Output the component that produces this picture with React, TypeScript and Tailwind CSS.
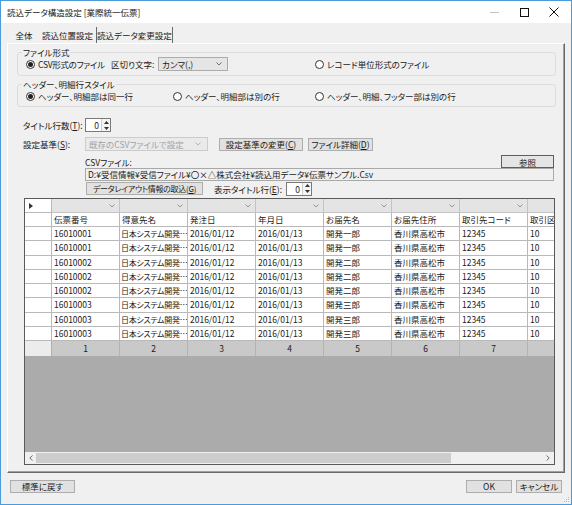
import React from "react";

const cols = ["伝票番号", "得意先名", "発注日", "年月日", "お届先名", "お届先住所", "取引先コード", "取引区分"];

const rows = [
  ["16010001", "開発一郎"],
  ["16010001", "開発一郎"],
  ["16010002", "開発二郎"],
  ["16010002", "開発二郎"],
  ["16010002", "開発二郎"],
  ["16010003", "開発三郎"],
  ["16010003", "開発三郎"],
  ["16010003", "開発三郎"],
];

function Radio({ checked, label, className }: { checked?: boolean; label: string; className?: string }) {
  return (
    <span className="flex items-center gap-[3px] whitespace-nowrap">
      <span className="w-[9px] h-[9px] rounded-full border border-[#333] bg-white flex items-center justify-center">
        {checked && <span className="w-[5px] h-[5px] rounded-full bg-[#222]" />}
      </span>
      <span className={className}>{label}</span>
    </span>
  );
}

function Btn({ children, className }: { children: React.ReactNode; className?: string }) {
  return (
    <div
      className={`h-[13px] flex items-center justify-center bg-[#e1e1e1] border border-[#adadad] leading-none whitespace-nowrap ${className ?? ""}`}
    >
      {children}
    </div>
  );
}

function Chevron({ color = "#606060" }: { color?: string }) {
  return (
    <svg width="6" height="4" viewBox="0 0 6 4">
      <polyline points="0.5,0.5 3,3 5.5,0.5" fill="none" stroke={color} strokeWidth="0.9" />
    </svg>
  );
}

function Spin() {
  return (
    <div className="w-[26px] h-[14px] bg-white border border-[#7a7a7a] flex">
      <div className="flex-1 text-right pr-[2px] leading-[12px]">0</div>
      <div className="w-[9px] flex flex-col border-l border-[#cfcfcf] bg-[#f4f4f4]">
        <div className="flex-1 flex items-center justify-center">
          <svg width="5" height="3" viewBox="0 0 5 3">
            <path d="M0 3L2.5 0L5 3Z" fill="#333" />
          </svg>
        </div>
        <div className="flex-1 flex items-center justify-center">
          <svg width="5" height="3" viewBox="0 0 5 3">
            <path d="M0 0L2.5 3L5 0Z" fill="#333" />
          </svg>
        </div>
      </div>
    </div>
  );
}

function DataGrid() {
  return (
    <div className="ml-[7px] mt-[3px] w-[531px] h-[267px] border border-[#5a5a5a] bg-[#ababab] flex flex-col overflow-hidden">
      {/* filter row */}
      <div className="grid grid-cols-[27px_repeat(8,68px)] h-[14px] shrink-0">
        <div className="bg-white border-r border-b border-[#b9b9b9] flex items-center pl-[4px]">
          <svg width="4" height="6" viewBox="0 0 4 6">
            <path d="M0 0L4 3L0 6Z" fill="#333" />
          </svg>
        </div>
        {cols.map((c) => (
          <div key={c} className="bg-[#e4e4e4] border-r border-b border-[#c4c4c4] flex items-center justify-end pr-[4px]">
            <Chevron color="#8a8a8a" />
          </div>
        ))}
      </div>
      {/* column names */}
      <div className="grid grid-cols-[27px_repeat(8,68px)] h-[14px] shrink-0">
        <div className="bg-white border-r border-b border-[#b9b9b9]" />
        {cols.map((c) => (
          <div key={c} className="bg-white border-r border-b border-[#b9b9b9] pl-[2px] leading-[13px] whitespace-nowrap overflow-hidden">
            {c}
          </div>
        ))}
      </div>
      {rows.map(([no, name], i) => (
        <div key={i} className="grid grid-cols-[27px_repeat(8,68px)] h-[14.25px] shrink-0">
          <div className="bg-white border-r border-b border-[#b9b9b9]" />
          <div className="bg-white border-r border-b border-[#b9b9b9] pl-[2px] leading-[13px] whitespace-nowrap overflow-hidden">{no}</div>
          <div className="bg-white border-r border-b border-[#b9b9b9] pl-[1px] leading-[13px] whitespace-nowrap overflow-hidden text-[8px] tracking-[-0.3px]">
            日本システム開発…
          </div>
          {["2016/01/12", "2016/01/13", name, "香川県高松市", "12345", "10"].map((v, j) => (
            <div
              key={j}
              className="bg-white border-r border-b border-[#b9b9b9] pl-[2px] leading-[13px] whitespace-nowrap overflow-hidden"
            >
              {v}
            </div>
          ))}
        </div>
      ))}
      {/* index row */}
      <div className="grid grid-cols-[27px_repeat(8,68px)] h-[15px] shrink-0">
        <div className="bg-[#ececec] border-r border-[#b0b0b0]" />
        {["1", "2", "3", "4", "5", "6", "7", ""].map((n, j) => (
          <div key={j} className="bg-[#c9c9c9] border-r border-[#b3b3b3] text-center leading-[15px]">
            {n}
          </div>
        ))}
      </div>
      <div className="flex-1" />
      {/* horizontal scrollbar */}
      <div className="h-[12px] shrink-0 bg-[#f0f0f0] flex items-center">
        <div className="w-[11px] h-full flex items-center justify-center">
          <svg width="4" height="6" viewBox="0 0 4 6">
            <polyline points="3.5,0.5 0.8,3 3.5,5.5" fill="none" stroke="#606060" strokeWidth="0.9" />
          </svg>
        </div>
        <div className="w-[415px] h-[10px] bg-[#cdcdcd]" />
        <div className="flex-1" />
        <div className="w-[13px] h-full flex items-center justify-center">
          <svg width="4" height="6" viewBox="0 0 4 6">
            <polyline points="0.5,0.5 3.2,3 0.5,5.5" fill="none" stroke="#606060" strokeWidth="0.9" />
          </svg>
        </div>
      </div>
    </div>
  );
}

export default function App() {
  return (
    <div className="relative w-[572px] h-[505px] border border-[#4d9ad8] bg-[#f0f0f0] flex flex-col text-[8.5px] text-[#1a1a1a] font-['Noto_Sans_CJK_JP','Noto_Sans',sans-serif] [font-feature-settings:'palt'] leading-[10px] overflow-hidden">
      {/* title bar */}
      <div className="h-[22px] shrink-0 bg-white flex items-center">
        <div className="pl-[6px] whitespace-nowrap">読込データ構造設定 [業際統一伝票]</div>
        <div className="ml-auto flex pr-[2px]">
          <div className="w-[30px] h-[22px] flex items-center justify-center">
            <div className="w-[9px] h-px bg-[#c4c4c4]" />
          </div>
          <div className="w-[30px] h-[22px] flex items-center justify-center">
            <div className="w-[9px] h-[9px] border border-[#111]" />
          </div>
          <div className="w-[30px] h-[22px] flex items-center justify-center">
            <svg width="10" height="10" viewBox="0 0 10 10">
              <path d="M0.5 0.5L9.5 9.5M9.5 0.5L0.5 9.5" stroke="#111" strokeWidth="1" />
            </svg>
          </div>
        </div>
      </div>

      {/* tabs */}
      <div className="mt-[4px] h-[16px] flex items-stretch ml-[8px] whitespace-nowrap">
        <div className="w-[30px] flex items-center justify-center">全体</div>
        <div className="w-[58px] flex items-center justify-center border-r border-[#696969]">読込位置設定</div>
        <div className="w-[76px] flex items-center justify-center border-r border-[#696969]">読込データ変更設定</div>
      </div>

      {/* tab panel */}
      <div className="mx-[6px] border border-white border-r-[#696969] border-b-[#696969] shadow-[inset_-1px_-1px_0_#a0a0a0] pl-[9px] pr-[8px] pb-[7px]">
        <fieldset className="mt-[3px] border border-[#dcdcdc] rounded-[3px] pb-[4px]">
          <legend className="ml-[4px] px-[1px] leading-[10px]">ファイル形式</legend>
          <div className="flex items-center h-[14px] pl-[8px]">
            <div className="w-[289px] flex items-center">
              <div className="w-[85px]">
                <Radio checked label="CSV形式のファイル" className="tracking-[-0.3px]" />
              </div>
              <div className="w-[47px] whitespace-nowrap">区切り文字:</div>
              <div className="w-[70px] h-[14px] bg-[#e5e5e5] border border-[#acacac] flex items-center justify-between pl-[3px] pr-[5px]">
                <span>カンマ(,)</span>
                <Chevron />
              </div>
            </div>
            <Radio label="レコード単位形式のファイル" />
          </div>
        </fieldset>

        <fieldset className="mt-[3px] border border-[#dcdcdc] rounded-[3px] pb-[3px]">
          <legend className="ml-[4px] px-[1px] leading-[10px]">ヘッダー、明細行スタイル</legend>
          <div className="flex items-center h-[14px] pl-[8px]">
            <div className="w-[147px]">
              <Radio checked label="ヘッダー、明細部は同一行" />
            </div>
            <div className="w-[142px]">
              <Radio label="ヘッダー、明細部は別の行" />
            </div>
            <Radio label="ヘッダー、明細、フッター部は別の行" />
          </div>
        </fieldset>

        {/* title rows */}
        <div className="mt-[11px] ml-[6px] flex items-center h-[14px]">
          <div className="w-[62px] whitespace-nowrap">
            タイトル行数(<u>T</u>):
          </div>
          <Spin />
        </div>

        <div className="mt-[5px] ml-[6px] flex items-center h-[14px]">
          <div className="w-[62px] whitespace-nowrap">
            設定基準(<u>S</u>):
          </div>
          <div className="w-[123px] h-[14px] bg-[#eaeaea] border border-[#cccccc] flex items-center justify-between pl-[3px] pr-[6px] text-[#a3a3a3]">
            <span className="whitespace-nowrap">既存のCSVファイルで設定</span>
            <Chevron color="#b0b0b0" />
          </div>
          <Btn className="ml-[11px] w-[84px]">
            <span>
              設定基準の変更(<u>C</u>)
            </span>
          </Btn>
          <Btn className="ml-[5px] w-[65px]">
            <span>
              ファイル詳細(<u>D</u>)
            </span>
          </Btn>
        </div>

        <div className="mt-[4px] ml-[68px] mr-[2px] flex items-center justify-between h-[13px]">
          <div>CSVファイル:</div>
          <div className="w-[53px] h-[13px] flex items-center justify-center bg-[#e5e5e5] border border-[#0078d7]">参照</div>
        </div>

        <div className="ml-[68px] w-[469px] h-[13px] bg-[#f0f0f0] border border-[#a9a9a9] pl-[2px] leading-[11px] whitespace-nowrap overflow-hidden">
          D:¥受信情報¥受信ファイル¥〇×△株式会社¥読込用データ¥伝票サンプル.Csv
        </div>

        <div className="mt-[1px] ml-[69px] flex items-center h-[13px]">
          <Btn className="w-[117px]">
            <span className="text-[8px] tracking-[-0.3px]">
              データレイアウト情報の取込(<u>G</u>)
            </span>
          </Btn>
          <div className="ml-[11px] w-[72px] whitespace-nowrap">
            表示タイトル行(<u>E</u>):
          </div>
          <Spin />
        </div>

        <DataGrid />
      </div>

      {/* footer */}
      <div className="mt-[7px] px-[9px] flex items-center">
        <Btn className="w-[65px]">標準に戻す</Btn>
        <Btn className="ml-auto w-[46px]">OK</Btn>
        <Btn className="ml-[4px] w-[46px]">キャンセル</Btn>
      </div>

      {/* size grip */}
      <svg className="absolute right-[1px] bottom-[1px]" width="6" height="6" viewBox="0 0 6 6">
        <rect x="4" y="0" width="1" height="1" fill="#bcbcbc" />
        <rect x="2" y="2" width="1" height="1" fill="#bcbcbc" />
        <rect x="4" y="2" width="1" height="1" fill="#bcbcbc" />
        <rect x="0" y="4" width="1" height="1" fill="#bcbcbc" />
        <rect x="2" y="4" width="1" height="1" fill="#bcbcbc" />
        <rect x="4" y="4" width="1" height="1" fill="#bcbcbc" />
      </svg>
    </div>
  );
}
